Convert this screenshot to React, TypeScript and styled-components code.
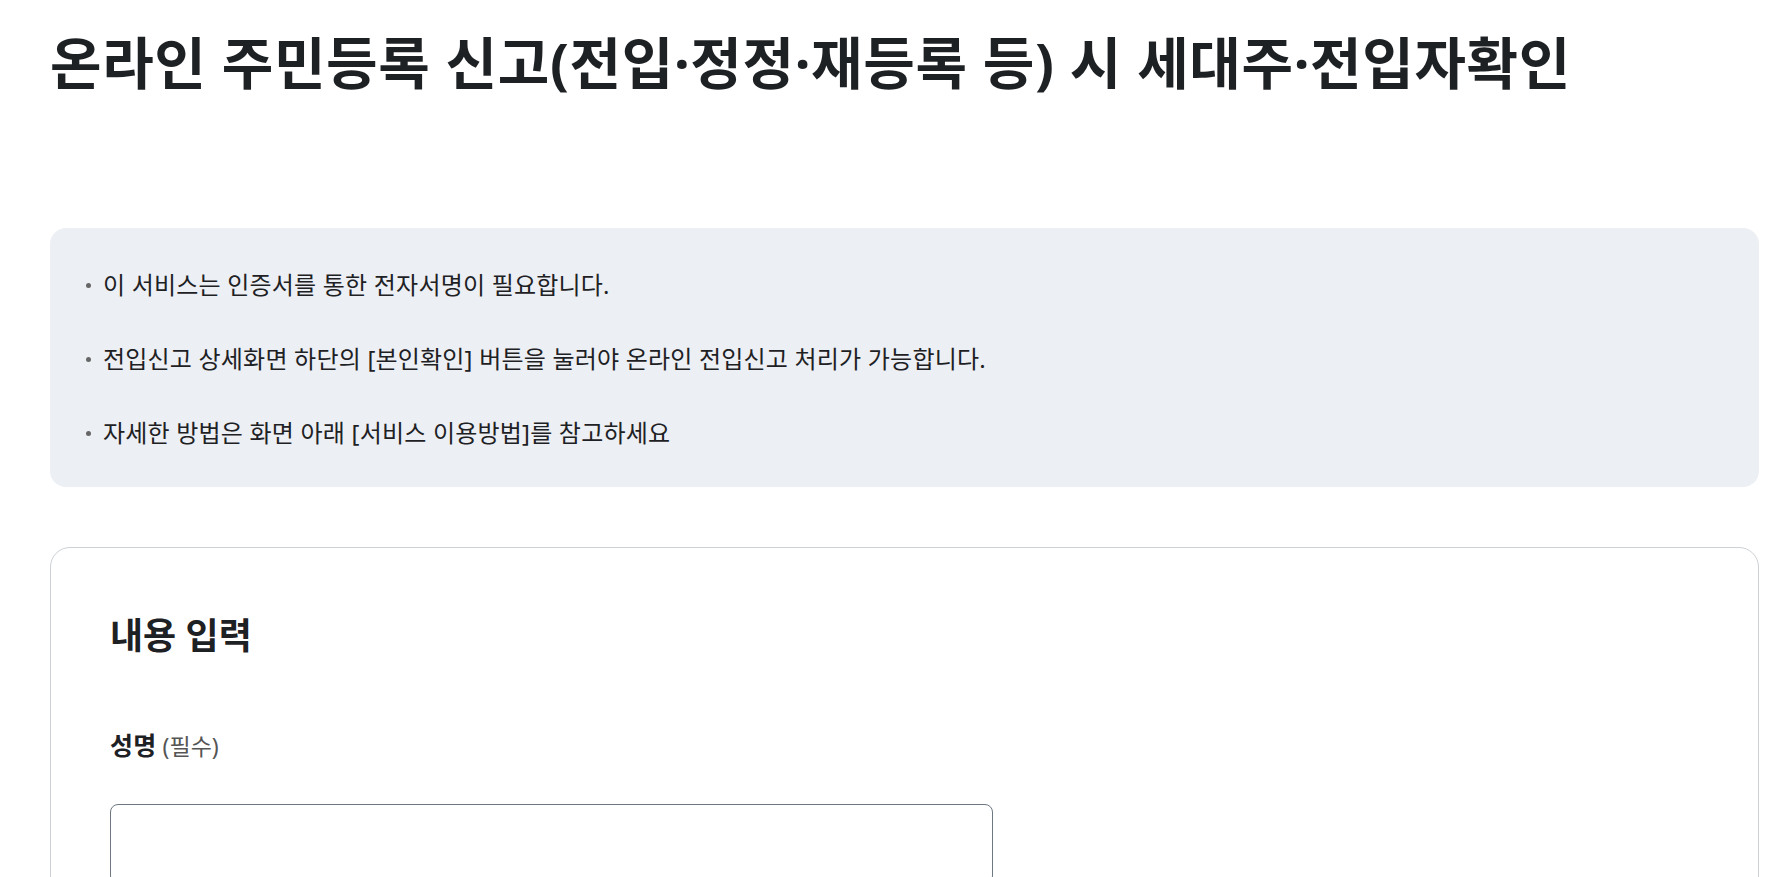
import styled, { createGlobalStyle } from "styled-components";

const GlobalStyle = createGlobalStyle`
  html, body {
    margin: 0;
    padding: 0;
    background: #fff;
    font-family: "Noto Sans", "Noto Sans CJK KR", sans-serif;
    color: #1e2124;
  }
`;

const notices = [
  "이 서비스는 인증서를 통한 전자서명이 필요합니다.",
  "전입신고 상세화면 하단의 [본인확인] 버튼을 눌러야 온라인 전입신고 처리가 가능합니다.",
  "자세한 방법은 화면 아래 [서비스 이용방법]를 참고하세요",
];

const Page = styled.div`
  padding: 27px 22px 40px 50px;
`;

const Title = styled.h1`
  margin: 0 0 131px;
  font-size: 56px;
  line-height: 70px;
  font-weight: 700;
  letter-spacing: 0.65px;
  color: #1e2124;
`;

const InfoBox = styled.ul`
  margin: 0 0 60px;
  list-style: none;
  padding: 40px 32px 38px 36px;
  background: #eceff3;
  border-radius: 16px;
  display: flex;
  flex-direction: column;
  gap: 41px;
`;

const InfoItem = styled.li`
  position: relative;
  padding-left: 17px;
  font-size: 24px;
  line-height: 33px;
  letter-spacing: 0.2px;
  color: #1e2124;

  &::before {
    content: "";
    position: absolute;
    left: 0;
    top: 15px;
    width: 5px;
    height: 5px;
    border-radius: 50%;
    background: #666;
  }
`;

const Card = styled.section`
  border: 1px solid #cdd1d5;
  border-radius: 20px;
  padding: 65px 59px 60px;
`;

const CardTitle = styled.h2`
  margin: 0 0 71px;
  font-size: 36px;
  line-height: 45px;
  font-weight: 700;
  letter-spacing: 0;
`;

const Label = styled.label`
  display: block;
  margin-bottom: 41px;
  font-size: 25px;
  line-height: 33px;
  font-weight: 700;
  letter-spacing: 0.3px;
`;

const Required = styled.span`
  font-size: 23px;
  font-weight: 400;
  letter-spacing: 0;
  color: #555;
  margin-left: 6px;
`;

const Input = styled.input`
  display: block;
  box-sizing: border-box;
  width: 883px;
  height: 80px;
  border: 1px solid #6d7882;
  border-radius: 8px;
  padding: 0 20px;
  font-size: 20px;
  font-family: inherit;
`;

export default function App() {
  return (
    <>
      <GlobalStyle />
      <Page>
        <Title>온라인 주민등록 신고(전입·정정·재등록 등) 시 세대주·전입자확인</Title>
        <InfoBox>
          {notices.map((n) => (
            <InfoItem key={n}>{n}</InfoItem>
          ))}
        </InfoBox>
        <Card>
          <CardTitle>내용 입력</CardTitle>
          <Label htmlFor="name">
            성명<Required>(필수)</Required>
          </Label>
          <Input id="name" type="text" />
        </Card>
      </Page>
    </>
  );
}
